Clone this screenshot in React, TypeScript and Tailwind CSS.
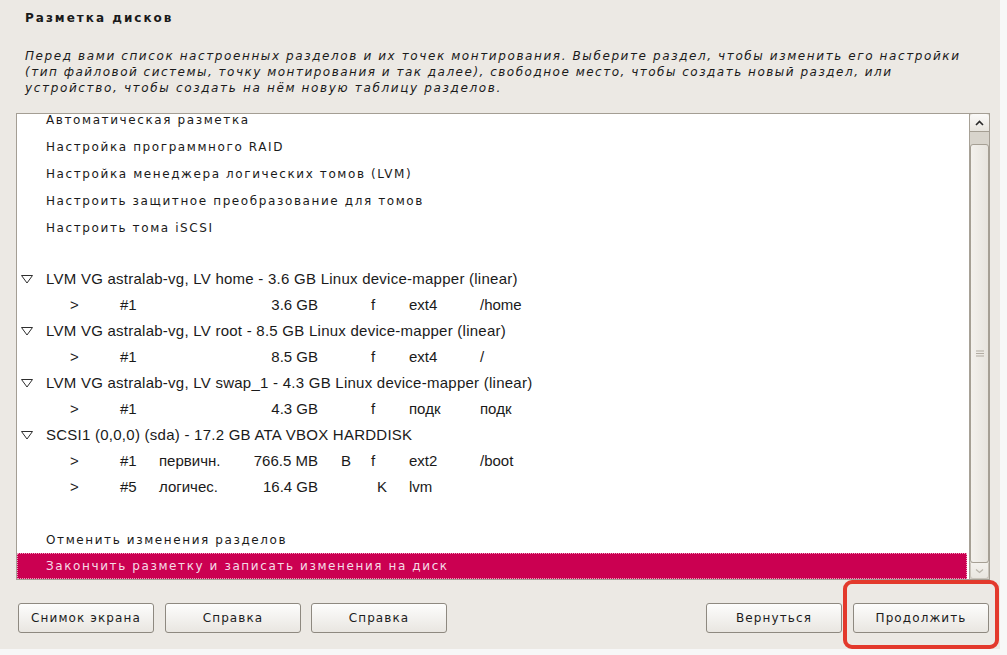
type Part = {
  num: string;
  type?: string;
  size: string;
  boot?: string;
  flag: string;
  flagCls?: string;
  fs: string;
  mount?: string;
};

function Tri() {
  return (
    <svg width="14" height="10" viewBox="0 0 14 10" className="shrink-0">
      <path d="M1.5 1.5 L12.5 1.5 L7 9 Z" fill="none" stroke="#2e2e2e" strokeWidth="1" />
    </svg>
  );
}

function MenuRow({ t, h = "h-[27px] pt-[4px]" }: { t: string; h?: string }) {
  return (
    <div
      className={
        h +
        " shrink-0 flex items-center pl-[29px] font-['DejaVu_Sans',sans-serif] text-[12px] tracking-[1.6px] text-[#1a1a1a] whitespace-nowrap"
      }
    >
      <span>{t}</span>
    </div>
  );
}

function HeadRow({ t }: { t: string }) {
  return (
    <div className="h-[26px] shrink-0 flex items-center pl-[3px] font-['Liberation_Sans',sans-serif] text-[15px] tracking-[0.25px] text-[#1a1a1a] whitespace-nowrap">
      <div className="w-[26px] flex items-center">
        <Tri />
      </div>
      <span>{t}</span>
    </div>
  );
}

function PartRow({ p }: { p: Part }) {
  return (
    <div className="h-[26px] shrink-0 flex items-center font-['Liberation_Sans',sans-serif] text-[15px] text-[#1a1a1a] whitespace-nowrap">
      <span className="w-[53px]" />
      <span className="w-[50px]">&gt;</span>
      <span className="w-[39px]">{p.num}</span>
      <span className="w-[80px]">{p.type ?? ""}</span>
      <span className="w-[79px] text-right">{p.size}</span>
      <span className="w-[23px]" />
      <span className="w-[30px]">{p.boot ?? ""}</span>
      <span className={"w-[38px] " + (p.flagCls ?? "")}>{p.flag}</span>
      <span className="w-[71px]">{p.fs}</span>
      <span>{p.mount ?? ""}</span>
    </div>
  );
}

function Btn({ t }: { t: string }) {
  return (
    <div className="w-[136px] h-[30px] rounded-[3px] border border-[#8e8980] bg-gradient-to-b from-[#fdfdfc] to-[#e9e6e1] flex items-center justify-center font-['DejaVu_Sans',sans-serif] text-[12px] tracking-[1.1px] text-[#1c1c1c]">
      <span>{t}</span>
    </div>
  );
}

export default function App() {
  return (
    <div className="w-[1007px] h-[655px] bg-[#f7f7f7] overflow-hidden">
      <div className="relative w-[1000px] h-[649px] bg-[#ece9e4] flex flex-col">
        <div className="mt-[10px] ml-[25px] h-[16px] leading-[16px] font-['DejaVu_Sans',sans-serif] font-bold text-[12px] tracking-[2px] text-[#1a1a1a]">
          Разметка дисков
        </div>
        <div className="mt-[22px] ml-[25px] font-['DejaVu_Sans',sans-serif] italic text-[12px] leading-[16px] text-[#1a1a1a] whitespace-nowrap">
          <div className="tracking-[1.6px]">
            Перед вами список настроенных разделов и их точек монтирования. Выберите раздел, чтобы изменить его настройки
          </div>
          <div className="tracking-[1.5px]">
            (тип файловой системы, точку монтирования и так далее), свободное место, чтобы создать новый раздел, или
          </div>
          <div className="tracking-[1.65px]">устройство, чтобы создать на нём новую таблицу разделов.</div>
        </div>

        <div className="mt-[17px] ml-[16px] w-[974px] h-[467px] border border-[#a49e94] bg-white flex">
          <div className="flex-1 overflow-hidden">
            <div className="mt-[-10px] flex flex-col">
              <MenuRow t="Автоматическая разметка" />
              <MenuRow t="Настройка программного RAID" />
              <MenuRow t="Настройка менеджера логических томов (LVM)" />
              <MenuRow t="Настроить защитное преобразование для томов" />
              <MenuRow t="Настроить тома iSCSI" />
              <div className="h-[27px] shrink-0" />
              <HeadRow t="LVM VG astralab-vg, LV home - 3.6 GB Linux device-mapper (linear)" />
              <PartRow p={{ num: "#1", size: "3.6 GB", flag: "f", fs: "ext4", mount: "/home" }} />
              <HeadRow t="LVM VG astralab-vg, LV root - 8.5 GB Linux device-mapper (linear)" />
              <PartRow p={{ num: "#1", size: "8.5 GB", flag: "f", fs: "ext4", mount: "/" }} />
              <HeadRow t="LVM VG astralab-vg, LV swap_1 - 4.3 GB Linux device-mapper (linear)" />
              <PartRow p={{ num: "#1", size: "4.3 GB", flag: "f", fs: "подк", mount: "подк" }} />
              <HeadRow t="SCSI1 (0,0,0) (sda) - 17.2 GB ATA VBOX HARDDISK" />
              <PartRow
                p={{ num: "#1", type: "первичн.", size: "766.5 MB", boot: "B", flag: "f", fs: "ext2", mount: "/boot" }}
              />
              <PartRow p={{ num: "#5", type: "логичес.", size: "16.4 GB", flag: "K", flagCls: "pl-[6px]", fs: "lvm" }} />
              <div className="h-[27px] shrink-0" />
              <MenuRow t="Отменить изменения разделов" h="h-[26px]" />
              <div className="h-[26px] shrink-0 mr-[2px] flex items-center pl-[28px] bg-[#cb0051] border border-dotted border-[#ef9fbf] font-['DejaVu_Sans',sans-serif] text-[12px] tracking-[1.6px] text-[#f6dbe6] whitespace-nowrap">
                Закончить разметку и записать изменения на диск
              </div>
            </div>
          </div>
          <div className="w-[20px] flex flex-col border-l border-[#a7a196] bg-[#d8d4cc]">
            <div className="h-[18px] rounded-t-[3px] border-b border-[#a59f94] bg-gradient-to-b from-[#fbfaf8] to-[#e8e5df] flex items-center justify-center">
              <svg width="9" height="6" viewBox="0 0 9 6">
                <path d="M1 5 L4.5 1.5 L8 5" fill="none" stroke="#2a2a2a" strokeWidth="1.6" />
              </svg>
            </div>
            <div className="h-[12px]" />
            <div className="flex-1 rounded-[3px] border border-[#a59f94] bg-gradient-to-r from-[#f3f1ed] to-[#e7e4de] flex items-center justify-center">
              <svg width="8" height="7" viewBox="0 0 8 7">
                <path d="M0 1 H8 M0 3.5 H8 M0 6 H8" stroke="#b1aba1" strokeWidth="1" />
              </svg>
            </div>
            <div className="h-[16px] rounded-b-[3px] border border-t-0 border-[#c9c4bb] bg-gradient-to-b from-[#f3f1ed] to-[#e9e6e0] flex items-center justify-center">
              <svg width="9" height="6" viewBox="0 0 9 6">
                <path d="M1 1.5 L4.5 4.5 L8 1.5" fill="none" stroke="#b9b4ab" strokeWidth="1.2" />
              </svg>
            </div>
          </div>
        </div>

        <div className="mt-[23px] ml-[18px] mr-[11px] flex items-center">
          <Btn t="Снимок экрана" />
          <div className="ml-[11px]">
            <Btn t="Справка" />
          </div>
          <div className="ml-[10px]">
            <Btn t="Справка" />
          </div>
          <div className="flex-1" />
          <Btn t="Вернуться" />
          <div className="ml-[11px]">
            <Btn t="Продолжить" />
          </div>
        </div>

        <div className="absolute left-[843px] top-[580px] w-[156px] h-[69px] rounded-[9px] border-[4px] border-[#e3392c] pointer-events-none" />
      </div>
    </div>
  );
}
